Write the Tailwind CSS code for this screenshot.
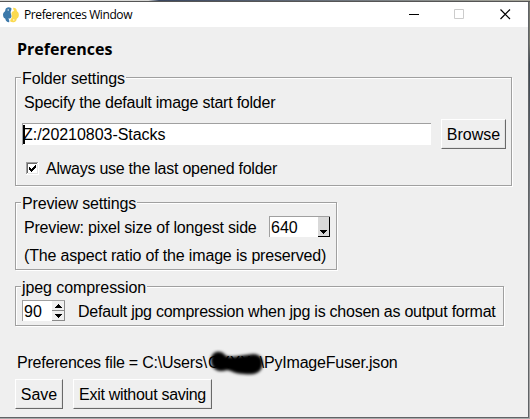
<!DOCTYPE html>
<html lang="en">
<head>
<meta charset="utf-8">
<title>Preferences Window</title>
<script src="https://cdn.jsdelivr.net/npm/@tailwindcss/browser@4"></script>
</head>
<body class="w-[530px] h-[419px] overflow-hidden flex flex-col bg-[#a9aaab] text-black text-[16px] leading-[18px] tracking-[-0.22px] font-['Liberation_Sans',Arial,sans-serif] whitespace-nowrap">
<div class="h-[2px] shrink-0 bg-linear-to-r from-[#d8d8d6] from-28% via-[#39465f] via-30% to-[#aaa99c] border-b border-[#555]"></div>
<div class="flex h-[417px]">
  <main class="w-[529px] h-[416px] shrink-0 bg-[#efefef] border-r border-b border-[#606366] flex flex-col">
    <header class="h-[25px] shrink-0 bg-white flex items-center pl-[3px] font-['Open_Sans','Noto_Sans',sans-serif]">
      <svg class="shrink-0" width="16" height="16" viewBox="0 0 16 16">
        <path d="M8.2 1C5.8-.4 2.6.4 2.3 3c0 1.2-.4 1.5-1.3 2.2C-.3 6.3-.2 9 .7 10.6c.4.8 1.6.6 1.7 1.3.1 1.8 1.8 3.4 3.7 3.3.5-1.4.1-2.6-.8-3.7 2.1.2 3.5-1.1 3.1-2.9C8.1 6.6 7.3 5.6 7.8 4.3 8.2 3.3 8.8 2.2 8.2 1Z" fill="#3c79aa"/>
        <path d="M10.2.8c1.8-.3 3.6 1 3.6 2.9.1 1 1.3 1 1.7 2.2.8 2.5.1 4.6-1.5 5.7-.6.4-.3 1.7-1 2.3-1.3 1.6-3.7 1.7-5.7.7-.4-1.1.1-2.2 1-3.2.9-1.1.8-2.2.4-3.4-.7-2 .3-3.8 2.6-3.9-.7-1-1.3-2-1.1-3.3Z" fill="#fbda50"/>
        <circle cx="5.2" cy="3" r=".7" fill="white"/><circle cx="10.8" cy="12.9" r=".7" fill="white"/>
      </svg>
      <span class="ml-[5px] text-[12px] leading-[16px] w-[110px] tracking-[-0.4px]">Preferences Window</span>
      <svg class="ml-[275px] shrink-0" width="11" height="11" viewBox="0 0 11 11"><path d="M0 5.5h10" stroke="#000"/></svg>
      <svg class="ml-[34px] shrink-0" width="11" height="11" viewBox="0 0 11 11" fill="none"><path d="M.5.5h9v9h-9z" stroke="#ccc"/></svg>
      <svg class="ml-[35px] shrink-0" width="11" height="11" viewBox="0 0 11 11"><path d="M.5.5l9.5 9.5M10 .5L.5 10" stroke="#000" stroke-width="1.2"/></svg>
    </header>

    <h1 class="mt-[13px] ml-[17px] h-[19px] shrink-0 text-[16px] leading-[19px] tracking-[0.02px] font-bold font-['Open_Sans','Noto_Sans',sans-serif]">Preferences</h1>

    <section class="mt-[18px] ml-[15px] w-[497px] h-[109px] shrink-0 border border-[#a0a0a0] shadow-[1px_1px_0_#fff,inset_1px_1px_0_#fff] flex flex-col items-start">
      <h2 class="-mt-[8px] ml-[5px] px-px h-[18px] bg-[#efefef] tracking-[-0.13px]">Folder settings</h2>
      <p class="mt-[6px] ml-[8px] h-[18px]">Specify the default image start folder</p>
      <div class="mt-[7px] ml-[6px] flex items-start">
        <div class="mt-[4px] w-[409px] h-[22px] bg-white border-t border-l border-[#a0a0a0] flex items-start"><i class="mt-px w-[2px] h-[19px] bg-black"></i><span class="mt-[2px] -ml-[2px] tracking-[-0.04px]">Z:/20210803-Stacks</span></div>
        <button class="ml-[10px] w-[65px] h-[30px] pt-[2px] tracking-normal border border-t-white border-l-white border-r-[#696969] border-b-[#696969] shadow-[inset_-1px_-1px_0_#e3e3e3]">Browse</button>
      </div>
      <label class="mt-[11px] ml-[10px] flex items-start h-[18px]">
        <svg class="mt-[2px]" width="13" height="13" viewBox="0 0 13 13" shape-rendering="crispEdges"><path d="M0 0h13v13H0z" fill="#fff"/><path d="M.5 12V.5H12" fill="none" stroke="#a0a0a0"/><path d="M1.5 11V1.5H11" fill="none" stroke="#696969"/><path d="M1.5 11.5h10v-10" fill="none" stroke="#e3e3e3"/><path d="M3 5h1v1h1v1h1V6h1V5h1V4h1V3h1v3H9v1H8v1H7v1H6v1H5V9H4V8H3z"/></svg>
        <span class="ml-[7px] tracking-[-0.25px]">Always use the last opened folder</span>
      </label>
    </section>

    <section class="mt-[16px] ml-[15px] w-[322px] h-[68px] shrink-0 border border-[#a0a0a0] shadow-[1px_1px_0_#fff,inset_1px_1px_0_#fff] flex flex-col items-start">
      <h2 class="-mt-[8px] ml-[5px] px-px h-[18px] bg-[#efefef] tracking-[-0.15px]">Preview settings</h2>
      <div class="mt-[3px] ml-[8px] flex items-start h-[22px]">
        <span class="mt-[3px] w-[245px] tracking-[-0.19px]">Preview: pixel size of longest side</span>
        <div class="w-[61px] h-[21px] bg-white border-t border-l border-[#a0a0a0] flex items-center">
          <span class="mt-[2px] ml-px w-[47px] tracking-normal">640</span>
          <div class="w-[12px] h-[20px] bg-[#d9d9d9] border-r border-b border-black flex items-end justify-center pb-[2px]">
            <svg width="7" height="4" viewBox="0 0 7 4" shape-rendering="crispEdges"><path d="M0 0h7v1H6v1H5v1H4v1H3V3H2V2H1V1H0z"/></svg>
          </div>
        </div>
      </div>
      <p class="mt-[9px] ml-[8px] h-[18px] tracking-[-0.165px]">(The aspect ratio of the image is preserved)</p>
    </section>

    <section class="mt-[16px] ml-[15px] w-[489px] h-[40px] shrink-0 border border-[#a0a0a0] shadow-[1px_1px_0_#fff,inset_1px_1px_0_#fff] flex flex-col items-start">
      <h2 class="-mt-[8px] ml-[5px] px-px h-[18px] bg-[#efefef] tracking-[-0.08px]">jpeg compression</h2>
      <div class="mt-[3px] ml-[6px] flex items-start h-[22px]">
        <div class="w-[43px] h-[21px] bg-white border-t border-l border-[#a0a0a0] flex items-center">
          <span class="mt-[2px] ml-px w-[28px] tracking-normal">90</span>
          <div class="w-[13px] h-[20px] flex flex-col">
            <div class="h-[10px] bg-[#efefef] border-r border-b border-[#8a8a8a] flex items-center justify-center"><svg width="7" height="4" viewBox="0 0 7 4" shape-rendering="crispEdges"><path d="M3 0h1v1h1v1h1v1h1v1H0V3h1V2h1V1h1z"/></svg></div>
            <div class="h-[10px] bg-[#efefef] border-r border-b border-[#8a8a8a] flex items-center justify-center"><svg width="7" height="4" viewBox="0 0 7 4" shape-rendering="crispEdges"><path d="M0 0h7v1H6v1H5v1H4v1H3V3H2V2H1V1H0z"/></svg></div>
          </div>
        </div>
        <span class="mt-[3px] ml-[13px] tracking-[-0.25px]">Default jpg compression when jpg is chosen as output format</span>
      </div>
    </section>

    <div class="mt-[28px] ml-[17px] h-[18px] shrink-0 flex">
      <span class="w-[191px]">Preferences file = C:\Users\</span>
      <span class="relative w-[56px] h-[18px]">CXXX<span class="absolute right-0 top-0">\</span>
        <svg class="absolute -left-[4px] -top-[6px]" width="70" height="32" viewBox="0 0 70 32"><defs><filter id="soft"><feGaussianBlur stdDeviation="1.7"/></filter></defs><path d="M7 11C8 2 18 2 22 8c9 2 17-1 28-2 8 1 10 7 8 13-2 7-10 8-18 7-9 0-11-3-17-4C16 25 6 22 7 11Z" filter="url(#soft)"/></svg>
      </span>
      <span class="tracking-[-0.2px]">PyImageFuser.json</span>
    </div>

    <div class="mt-[7px] ml-[15px] flex gap-[10px] shrink-0">
      <button class="w-[48px] h-[30px] pt-[2px] tracking-normal border border-t-white border-l-white border-r-[#696969] border-b-[#696969] shadow-[inset_-1px_-1px_0_#e3e3e3]">Save</button>
      <button class="w-[139px] h-[30px] pt-[2px] tracking-[-0.3px] border border-t-white border-l-white border-r-[#696969] border-b-[#696969] shadow-[inset_-1px_-1px_0_#e3e3e3]">Exit without saving</button>
    </div>
  </main>
  <div class="w-px h-[416px] bg-linear-to-b from-[#77796f] from-10% via-[#3d4650] via-15% to-[#a5a5a5] to-75%"></div>
</div>
</body>
</html>
